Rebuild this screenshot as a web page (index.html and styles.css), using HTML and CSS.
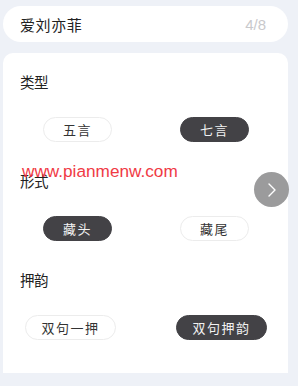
FILE: index.html
```html
<!DOCTYPE html>
<html lang="zh">
<head>
<meta charset="utf-8">
<link rel="stylesheet" href="styles.css">
</head>
<body>
<div class="page">
  <div class="name-field">
    <span class="name-text">爱刘亦菲</span>
    <span class="name-count">4/8</span>
  </div>
  <div class="panel">
    <div class="section">
      <div class="label">类型</div>
      <div class="options options--narrow">
        <span class="chip">五言</span>
        <span class="chip chip--on">七言</span>
      </div>
    </div>
    <div class="section">
      <div class="label">形式</div>
      <div class="options options--narrow">
        <span class="chip chip--on">藏头</span>
        <span class="chip">藏尾</span>
      </div>
    </div>
    <div class="section">
      <div class="label">押韵</div>
      <div class="options options--wide">
        <span class="chip chip--long">双句一押</span>
        <span class="chip chip--long chip--on">双句押韵</span>
      </div>
    </div>
  </div>
  <div class="watermark">www.pianmenw.com</div>
  <div class="next-btn">
    <svg width="35" height="35" viewBox="0 0 35 35"><path d="M15 12 L21 18 L15 24" fill="none" stroke="#fff" stroke-width="1.4" stroke-linecap="round" stroke-linejoin="round"/></svg>
  </div>
</div>
</body>
</html>
```

FILE: styles.css
```css
html, body {
  margin: 0;
  padding: 0;
}
body {
  background: #eef1f7;
  font-family: "Noto Sans CJK SC", "Noto Sans", sans-serif;
  color: #222;
  width: 298px;
  height: 386px;
  overflow: hidden;
}
.page {
  position: relative;
  padding: 6px 10px 0 3px;
}
.name-field {
  height: 36px;
  border-radius: 18px;
  background: #fff;
  display: flex;
  align-items: center;
  justify-content: space-between;
  padding: 0 22px 0 17px;
}
.name-text {
  font-size: 15px;
  letter-spacing: 0.6px;
  color: #222;
}
.name-count {
  font-family: "Liberation Sans", "Noto Sans", sans-serif;
  font-size: 15px;
  color: #c9c9cc;
}
.panel {
  margin-top: 11px;
  background: #fff;
  border-radius: 10px 10px 0 0;
  padding: 19px 0 32px;
  height: 320px;
  box-sizing: border-box;
  display: flex;
  flex-direction: column;
  gap: 29px;
}
.label {
  padding-left: 17px;
  font-size: 14.5px;
  line-height: 20px;
  color: #222;
  letter-spacing: -0.5px;
}
.options {
  margin-top: 25px;
  display: flex;
  justify-content: space-between;
}
.options--narrow {
  padding: 0 39px 0 40px;
}
.options--wide {
  padding: 0 21px 0 22px;
}
.chip {
  width: 69px;
  height: 25px;
  box-sizing: border-box;
  border: 1px solid #ececec;
  border-radius: 13px;
  display: flex;
  align-items: center;
  justify-content: center;
  font-size: 13px;
  color: #333;
  letter-spacing: 1.5px;
  background: #fff;
}
.chip--long {
  width: 91px;
}
.chip--on {
  background: #434246;
  border-color: #434246;
  color: #f2f2f2;
}
.watermark {
  position: absolute;
  left: 22px;
  top: 163px;
  font-family: "Liberation Sans", Arial, sans-serif;
  font-size: 17.2px;
  line-height: 17px;
  color: #f0303a;
  opacity: 0.95;
}
.next-btn {
  position: absolute;
  left: 254px;
  top: 172px;
  width: 35px;
  height: 35px;
  border-radius: 50%;
  background: #9b9b9c;
}
.next-btn svg {
  display: block;
}
```
